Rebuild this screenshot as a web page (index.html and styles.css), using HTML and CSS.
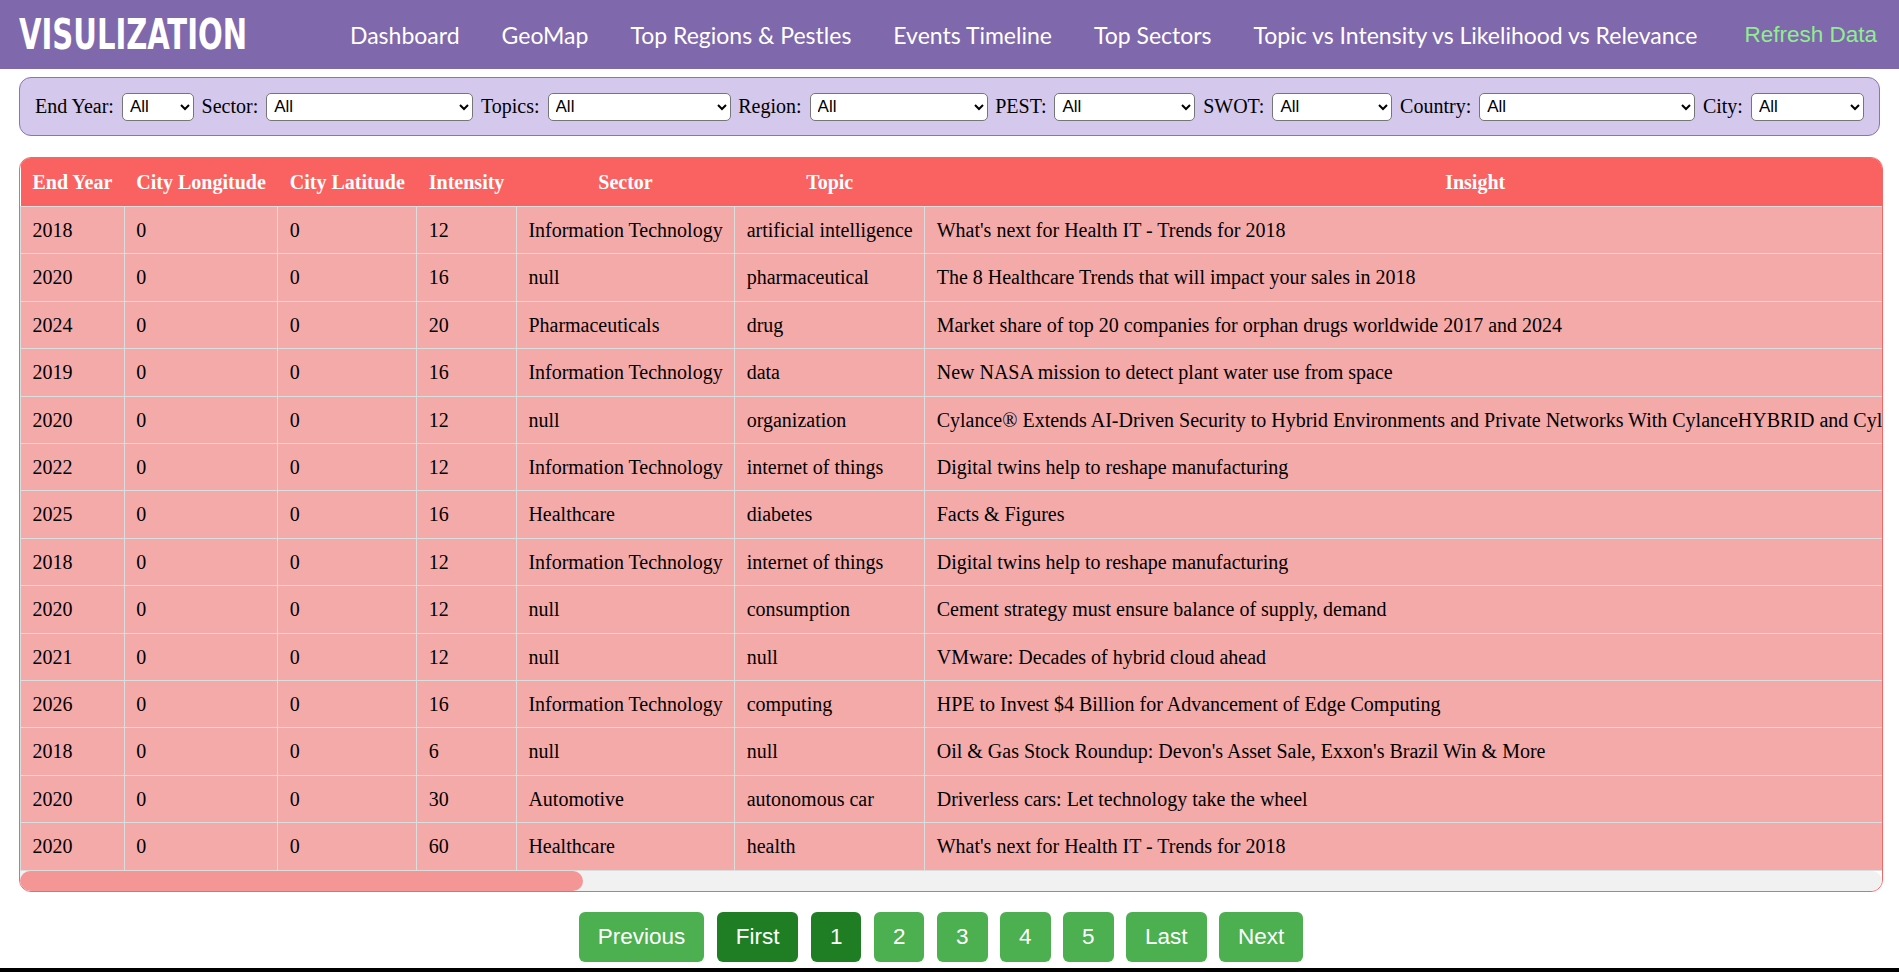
FILE: index.html
```html
<!DOCTYPE html>
<html lang="en">
<head>
<meta charset="utf-8">
<title>Visulization</title>
<link rel="stylesheet" href="styles.css">
</head>
<body>
<header class="topbar">
  <div class="logo-box"><span class="logo">VISULIZATION</span></div>
  <nav class="nav">
    <a href="#">Dashboard</a>
    <a href="#">GeoMap</a>
    <a href="#">Top Regions &amp; Pestles</a>
    <a href="#">Events Timeline</a>
    <a href="#">Top Sectors</a>
    <a href="#">Topic vs Intensity vs Likelihood vs Relevance</a>
  </nav>
  <button class="refresh">Refresh Data</button>
</header>

<section class="filters">
  <div class="field"><label>End Year:</label><select class="w-year"><option>All</option></select></div>
  <div class="field"><label>Sector:</label><select class="w-sector"><option>All</option></select></div>
  <div class="field"><label>Topics:</label><select class="w-topic"><option>All</option></select></div>
  <div class="field"><label>Region:</label><select class="w-region"><option>All</option></select></div>
  <div class="field"><label>PEST:</label><select class="w-pest"><option>All</option></select></div>
  <div class="field"><label>SWOT:</label><select class="w-swot"><option>All</option></select></div>
  <div class="field"><label>Country:</label><select class="w-country"><option>All</option></select></div>
  <div class="field"><label>City:</label><select class="w-city"><option>All</option></select></div>
</section>

<div class="table-wrap">
  <div class="table-view">
    <table class="data">
      <thead>
        <tr>
          <th>End Year</th><th>City Longitude</th><th>City Latitude</th><th>Intensity</th><th>Sector</th><th>Topic</th><th class="c-insight">Insight</th>
        </tr>
      </thead>
      <tbody>
        <tr><td>2018</td><td>0</td><td>0</td><td>12</td><td>Information Technology</td><td>artificial intelligence</td><td>What's next for Health IT - Trends for 2018</td></tr>
        <tr><td>2020</td><td>0</td><td>0</td><td>16</td><td>null</td><td>pharmaceutical</td><td>The 8 Healthcare Trends that will impact your sales in 2018</td></tr>
        <tr><td>2024</td><td>0</td><td>0</td><td>20</td><td>Pharmaceuticals</td><td>drug</td><td>Market share of top 20 companies for orphan drugs worldwide 2017 and 2024</td></tr>
        <tr><td>2019</td><td>0</td><td>0</td><td>16</td><td>Information Technology</td><td>data</td><td>New NASA mission to detect plant water use from space</td></tr>
        <tr><td>2020</td><td>0</td><td>0</td><td>12</td><td>null</td><td>organization</td><td>Cylance® Extends AI-Driven Security to Hybrid Environments and Private Networks With CylanceHYBRID and CylanceGATEWAY</td></tr>
        <tr><td>2022</td><td>0</td><td>0</td><td>12</td><td>Information Technology</td><td>internet of things</td><td>Digital twins help to reshape manufacturing</td></tr>
        <tr><td>2025</td><td>0</td><td>0</td><td>16</td><td>Healthcare</td><td>diabetes</td><td>Facts &amp; Figures</td></tr>
        <tr><td>2018</td><td>0</td><td>0</td><td>12</td><td>Information Technology</td><td>internet of things</td><td>Digital twins help to reshape manufacturing</td></tr>
        <tr><td>2020</td><td>0</td><td>0</td><td>12</td><td>null</td><td>consumption</td><td>Cement strategy must ensure balance of supply, demand</td></tr>
        <tr><td>2021</td><td>0</td><td>0</td><td>12</td><td>null</td><td>null</td><td>VMware: Decades of hybrid cloud ahead</td></tr>
        <tr><td>2026</td><td>0</td><td>0</td><td>16</td><td>Information Technology</td><td>computing</td><td>HPE to Invest $4 Billion for Advancement of Edge Computing</td></tr>
        <tr><td>2018</td><td>0</td><td>0</td><td>6</td><td>null</td><td>null</td><td>Oil &amp; Gas Stock Roundup: Devon's Asset Sale, Exxon's Brazil Win &amp; More</td></tr>
        <tr><td>2020</td><td>0</td><td>0</td><td>30</td><td>Automotive</td><td>autonomous car</td><td>Driverless cars: Let technology take the wheel</td></tr>
        <tr><td>2020</td><td>0</td><td>0</td><td>60</td><td>Healthcare</td><td>health</td><td>What's next for Health IT - Trends for 2018</td></tr>
      </tbody>
    </table>
  </div>
  <div class="hscroll"><div class="hscroll-thumb"></div></div>
</div>

<div class="pager">
  <button>Previous</button>
  <button class="active">First</button>
  <button class="active">1</button>
  <button>2</button>
  <button>3</button>
  <button>4</button>
  <button>5</button>
  <button>Last</button>
  <button>Next</button>
</div>

<footer class="footer"></footer>
</body>
</html>
```

FILE: styles.css
```css
html, body {
  margin: 0;
  padding: 0;
  overflow: hidden;
}

body {
  font-family: "Liberation Serif", "Times New Roman", serif;
  background: #ffffff;
  color: #000;
}

/* ---------- top bar ---------- */
.topbar {
  height: 69px;
  background: #7f68ab;
  display: flex;
  align-items: center;
  padding: 0 22px 0 19px;
  box-sizing: border-box;
}

.logo-box {
  width: 228px;
  overflow: visible;
  white-space: nowrap;
}

.logo {
  display: inline-block;
  font-family: "Liberation Sans Narrow", "DejaVu Sans Condensed", "Liberation Sans", sans-serif;
  font-stretch: condensed;
  font-weight: 700;
  font-size: 42px;
  color: #ffffff;
  transform: scaleX(0.77);
  transform-origin: left center;
}

.nav {
  display: flex;
  margin-left: 82px;
}

.nav a {
  padding: 0 21px;
  color: #ffffff;
  font-family: "Lato", "Open Sans", sans-serif;
  font-size: 23px;
  text-decoration: none;
  white-space: nowrap;
}

.refresh {
  margin-left: auto;
  background: none;
  border: 0;
  padding: 0;
  font-family: "Liberation Sans", Arial, sans-serif;
  font-size: 22.5px;
  color: #90ee90;
}

/* ---------- filters ---------- */
.filters {
  margin: 8px 19px 0 19px;
  height: 59px;
  box-sizing: border-box;
  border: 1px solid #8a74b6;
  border-radius: 12px;
  background: #d4c8ec;
  display: flex;
  align-items: center;
  justify-content: space-between;
  padding: 0 15px;
}

.field {
  display: flex;
  align-items: center;
  gap: 8px;
}

.field label {
  font-size: 20px;
  white-space: nowrap;
}

.field select {
  height: 28px;
  box-sizing: border-box;
  font-family: "Liberation Sans", Arial, sans-serif;
  font-size: 17px;
  color: #000;
  background: #ffffff;
  border: 1px solid #767676;
  border-radius: 5px;
  padding: 0 3px;
}

.w-year { width: 72px; }
.w-sector { width: 207px; }
.w-topic { width: 183px; }
.w-region { width: 178px; }
.w-pest { width: 141px; }
.w-swot { width: 120px; }
.w-country { width: 216px; }
.w-city { width: 113px; }

/* ---------- table ---------- */
.table-wrap {
  margin: 21px 16px 0 19px;
  border: 1px solid #f76464;
  border-radius: 12px;
  overflow: hidden;
}

.table-view {
  overflow: hidden;
}

.data {
  border-collapse: collapse;
  white-space: nowrap;
  font-size: 20px;
}

.data th {
  background: #fa6262;
  color: #ffffff;
  font-weight: 700;
  padding: 12.5px 12px;
  line-height: 23px;
  text-align: center;
}

.data td {
  background: #f5aaaa;
  padding: 12px 11.5px;
  line-height: 22.4px;
  border: 1px solid #dddddd;
  text-align: left;
}

.c-insight { min-width: 1051px; }

/* horizontal scroll indicator under the table */
.hscroll {
  height: 20px;
  background: #f1f1f1;
  border-radius: 0 10px 10px 10px;
}

.hscroll-thumb {
  width: 563px;
  height: 100%;
  background: #f49696;
  border-radius: 10px;
}

/* ---------- pagination ---------- */
.pager {
  display: flex;
  justify-content: center;
  margin-top: 20px;
  padding-right: 17px;
}

.pager button {
  margin: 0 6.25px;
  height: 50px;
  padding: 0 19px;
  font-family: "Liberation Sans", Arial, sans-serif;
  font-size: 22.5px;
  color: #ffffff;
  background: #4caf50;
  border: 0;
  border-radius: 6px;
}

.pager .active {
  background: #1f7e23;
}

.footer {
  margin-top: 6px;
  height: 20px;
  background: #000000;
}
```
